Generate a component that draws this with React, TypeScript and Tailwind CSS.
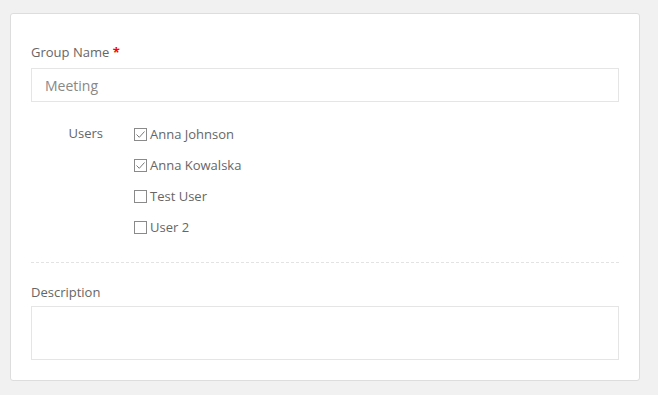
import React, { useState } from 'react';

type User = { name: string; checked: boolean };

const initialUsers: User[] = [
  { name: 'Anna Johnson', checked: true },
  { name: 'Anna Kowalska', checked: true },
  { name: 'Test User', checked: false },
  { name: 'User 2', checked: false },
];

const CheckBox: React.FC<{ checked: boolean }> = ({ checked }) => (
  <span className="w-[13px] h-[13px] border border-[#8a8a8a] bg-white flex items-center justify-center shrink-0">
    {checked && (
      <svg width="11" height="11" viewBox="0 0 11 11" fill="none">
        <path d="M1.5 5.5 L4.3 8.3 L9.5 2.5" stroke="#7a7a7a" strokeWidth="1" />
      </svg>
    )}
  </span>
);

export default function App() {
  const [users, setUsers] = useState(initialUsers);

  const toggle = (i: number) => {
    setUsers(prev => prev.map((u, idx) => (idx === i ? { ...u, checked: !u.checked } : u)));
  };

  return (
    <div className="w-[658px] h-[395px] bg-[#f1f1f1] pt-[13px] pl-[10px] font-['Open_Sans',sans-serif] text-[13px] text-[#666]">
      <div className="w-[630px] h-[368px] bg-white border border-[#dddddd] rounded-[3px] px-[20px] pt-[29px]">
        <div className="leading-[18px] mb-[7px]">
          Group Name <span className="text-[#ff0000] font-bold">*</span>
        </div>
        <input
          className="w-[588px] h-[34px] border border-[#e5e5e5] px-[13px] text-[14px] text-[#888] outline-none"
          defaultValue="Meeting"
        />

        <div className="flex pt-[23px]">
          <div className="w-[72px] text-right leading-[17px]">Users</div>
          <div className="ml-[31px] flex flex-col gap-[13px]">
            {users.map((u, i) => (
              <label key={u.name} className="flex items-center gap-[3px] leading-[18px] cursor-pointer" onClick={() => toggle(i)}>
                <CheckBox checked={u.checked} />
                <span>{u.name}</span>
              </label>
            ))}
          </div>
        </div>

        <div className="mt-[26px] border-t border-dashed border-[#e3e3e3] w-[588px]" />

        <div className="leading-[18px] mt-[20px] mb-[5px]">Description</div>
        <textarea className="w-[588px] h-[54px] border border-[#e5e5e5] block resize-none outline-none" />
      </div>
    </div>
  );
}
